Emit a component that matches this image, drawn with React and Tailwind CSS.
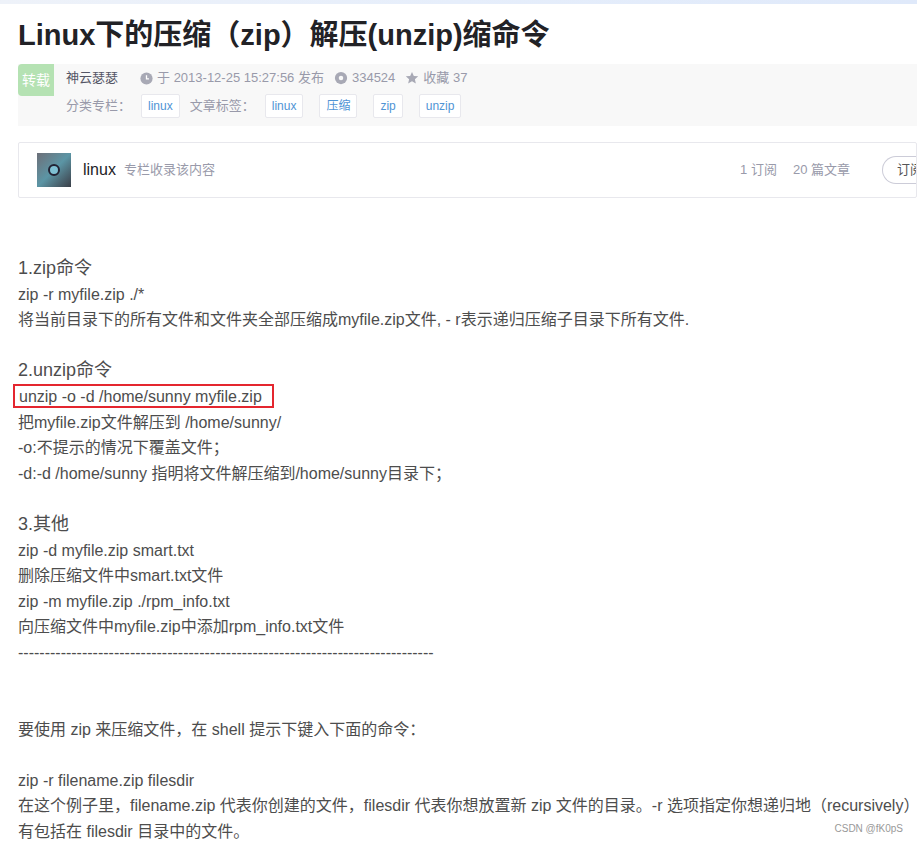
const f = { fontFamily: '"Liberation Sans", "Noto Sans CJK SC", sans-serif' }

function Tag({ children }) {
  return <span className="border border-[#e8e8ed] bg-white px-[6px] h-[24px] leading-[22px] text-[12px] text-[#5094d5] rounded-[2px]">{children}</span>
}

export default function App() {
  const L = 'h-[25.6px] leading-[25.6px] whitespace-nowrap'
  const H = 'h-[25.6px] leading-[25.6px] text-[18px] whitespace-nowrap'
  return (
    <div style={f} className="w-[917px] h-[842px] bg-white overflow-hidden relative text-[#333]">
      <div className="h-[4px] bg-gradient-to-r from-[#eef2f9] via-[#e6eefb] to-[#dfe9fa]" />
      <div className="pl-[18px]">
        <h1 className="mt-[12px] text-[29px] font-bold text-[#222226] leading-[38px] whitespace-nowrap">Linux下的压缩（zip）解压(unzip)缩命令</h1>
        <div className="mt-[10px] h-[62px] bg-[#f8f8f8] relative">
          <div className="absolute left-0 top-0 w-[36px] h-[32px] bg-[#b5e2b3] text-white text-[14px] flex items-center justify-center rounded-l-[4px]">转载</div>
          <div className="pl-[48px] pt-[6px] flex items-center gap-[14px] text-[13px] text-[#999aaa] h-[22px]">
            <span className="text-[#555666]">神云瑟瑟</span>
            <span className="flex items-center gap-1 ml-[8px]">
              <svg width="13" height="13" viewBox="0 0 16 16"><circle cx="8" cy="8" r="7.5" fill="#a8a9b5"/><path d="M8 4v4.5h3" stroke="#fff" strokeWidth="1.6" fill="none"/></svg>
              于 2013-12-25 15:27:56 发布
            </span>
            <span className="flex items-center gap-1 -ml-[4px]">
              <svg width="14" height="14" viewBox="0 0 16 16"><circle cx="8" cy="8" r="7" fill="#a8a9b5"/><circle cx="8" cy="8" r="2.6" fill="#f8f8f8"/></svg>
              334524
            </span>
            <span className="flex items-center gap-1 -ml-[4px]">
              <svg width="14" height="14" viewBox="0 0 16 16"><path d="M8 1l2.1 4.6 5 .5-3.8 3.3 1.1 4.9L8 11.8 3.6 14.3l1.1-4.9L.9 6.1l5-.5z" fill="#a8a9b5"/></svg>
              收藏 37
            </span>
          </div>
          <div className="pl-[48px] mt-[8px] flex items-center gap-[6px] text-[13px] text-[#999aaa]">
            <span className="mr-[4px]">分类专栏：</span>
            <Tag>linux</Tag>
            <span className="ml-[4px] mr-[4px]">文章标签：</span>
            <Tag>linux</Tag><span className="w-[4px]"/><Tag>压缩</Tag><span className="w-[4px]"/><Tag>zip</Tag><span className="w-[4px]"/><Tag>unzip</Tag>
          </div>
        </div>
        <div className="mt-[16px] h-[56px] border border-[#e8e8ed] rounded-[2px] flex items-center pl-[18px] pr-0">
          <div className="w-[34px] h-[34px] bg-gradient-to-br from-[#6b6f78] via-[#5b95a5] to-[#3a3f48] flex items-center justify-center">
            <div className="w-[12px] h-[12px] rounded-full bg-[#7fc0d3] border-2 border-[#223]" />
          </div>
          <span className="ml-[12px] text-[16px] text-[#222226]">linux</span>
          <span className="ml-[8px] text-[13px] text-[#999aaa]">专栏收录该内容</span>
          <span className="ml-auto text-[13px] text-[#999aaa]">1 订阅</span>
          <span className="ml-[16px] text-[13px] text-[#999aaa]">20 篇文章</span>
          <span className="ml-[32px] h-[28px] w-[34px] border border-[#ccccd8] border-r-0 rounded-l-[16px] text-[13px] text-[#555] leading-[26px] pl-[14px] overflow-hidden whitespace-nowrap">订阅</span>
        </div>
        <div className="mt-[58px] text-[16px] text-[#4d4d4d]">
          <div className={H}>1.zip命令</div>
          <div className={L}>zip -r myfile.zip ./*</div>
          <div className={L}>将当前目录下的所有文件和文件夹全部压缩成myfile.zip文件, - r表示递归压缩子目录下所有文件.</div>
          <div className={L}></div>
          <div className={H}>2.unzip命令</div>
          <div className={L}><span className="inline-block -ml-[5px] pl-[4px] pr-[10px] h-[24px] leading-[21px] border-2 border-[#e4262f]">unzip -o -d /home/sunny myfile.zip</span></div>
          <div className={L}>把myfile.zip文件解压到 /home/sunny/</div>
          <div className={L}>-o:不提示的情况下覆盖文件；</div>
          <div className={L}>-d:-d /home/sunny 指明将文件解压缩到/home/sunny目录下；</div>
          <div className={L}></div>
          <div className={H}>3.其他</div>
          <div className={L}>zip -d myfile.zip smart.txt</div>
          <div className={L}>删除压缩文件中smart.txt文件</div>
          <div className={L}>zip -m myfile.zip ./rpm_info.txt</div>
          <div className={L}>向压缩文件中myfile.zip中添加rpm_info.txt文件</div>
          <div className={L}>{'-'.repeat(78)}</div>
          <div className={L}></div>
          <div className={L}></div>
          <div className={L}>要使用 zip 来压缩文件，在 shell 提示下键入下面的命令：</div>
          <div className={L}></div>
          <div className={L}>zip -r filename.zip filesdir</div>
          <div className={L}>在这个例子里，filename.zip 代表你创建的文件，filesdir 代表你想放置新 zip 文件的目录。-r 选项指定你想递归地（recursively）包括所</div>
          <div className={L}>有包括在 filesdir 目录中的文件。</div>
        </div>
      </div>
      <div className="absolute right-[14px] top-[821px] text-[10px] text-[#999]">CSDN @fK0pS</div>
    </div>
  )
}
